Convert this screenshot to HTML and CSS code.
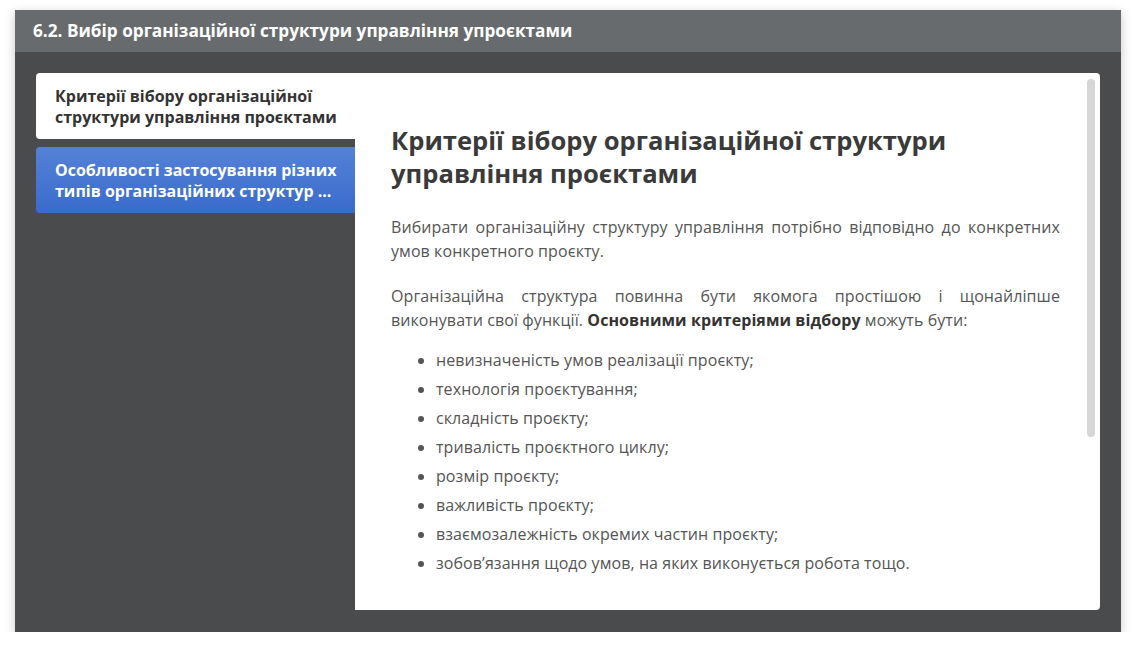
FILE: index.html
```html
<!DOCTYPE html>
<html lang="uk">
<head>
<meta charset="utf-8">
<title>6.2. Вибір організаційної структури управління упроєктами</title>
<link rel="stylesheet" href="styles.css">
</head>
<body>
<div class="frame">
  <div class="header">6.2. Вибір організаційної структури управління упроєктами</div>
  <div class="main">
    <div class="tabs">
      <div class="tab tab-active">Критерії вібору організаційної структури управління проєктами</div>
      <div class="tab tab-blue">Особливості застосування різних типів організаційних структур ...</div>
    </div>
    <div class="panel">
      <div class="scrollbar"></div>
      <h1 class="heading">Критерії вібору організаційної структури управління проєктами</h1>
      <p class="para">Вибирати організаційну структуру управління потрібно відповідно до конкретних умов конкретного проєкту.</p>
      <p class="para">Організаційна структура повинна бути якомога простішою і щонайліпше виконувати свої функції. <b>Основними критеріями відбору</b> можуть бути:</p>
      <ul class="list">
        <li>невизначеність умов реалізації проєкту;</li>
        <li>технологія проєктування;</li>
        <li>складність проєкту;</li>
        <li>тривалість проєктного циклу;</li>
        <li>розмір проєкту;</li>
        <li>важливість проєкту;</li>
        <li>взаємозалежність окремих частин проєкту;</li>
        <li>зобов’язання щодо умов, на яких виконується робота тощо.</li>
      </ul>
    </div>
  </div>
</div>
</body>
</html>
```
FILE: styles.css
```css
html, body {
  margin: 0;
  padding: 0;
  background: #ffffff;
}
body {
  font-family: "Open Sans", "Noto Sans", sans-serif;
}
.frame {
  margin: 10px 0 0 15px;
  width: 1106px;
  height: 622px;
  display: flex;
  flex-direction: column;
  box-shadow: 0 3px 10px rgba(0, 0, 0, 0.22);
}
.header {
  height: 42px;
  flex: none;
  background: #686b6d;
  color: #ffffff;
  font-weight: 700;
  font-size: 17.2px;
  line-height: 42px;
  padding-left: 18px;
  box-sizing: border-box;
}
.main {
  flex: 1;
  background: #4a4b4d;
  display: flex;
  padding: 21px 21px 22px 21px;
}
.tabs {
  width: 319px;
  flex: none;
  display: flex;
  flex-direction: column;
  gap: 8px;
}
.tab {
  height: 66px;
  box-sizing: border-box;
  padding: 13px 8px 11px 19px;
  font-size: 16px;
  font-weight: 700;
  line-height: 21px;
  border-radius: 4px 0 0 4px;
}
.tab-active {
  background: #ffffff;
  color: #333333;
}
.tab-blue {
  background: linear-gradient(#5582d7, #396bcb);
  color: #ffffff;
}
.panel {
  flex: 1;
  position: relative;
  background: #ffffff;
  border-radius: 0 4px 4px 0;
  padding: 51px 40px 0 36px;
  color: #555555;
}
.scrollbar {
  position: absolute;
  top: 6px;
  right: 5px;
  width: 8px;
  height: 358px;
  background: #d6d6d6;
  border-radius: 4px;
}
.heading {
  margin: 0 0 25px 0;
  font-size: 25.6px;
  font-weight: 700;
  line-height: 33px;
  color: #3a3a3a;
}
.para {
  margin: 0 0 21px 0;
  font-size: 16px;
  line-height: 24px;
  letter-spacing: 0.08px;
  text-align: justify;
}
.para b {
  color: #333333;
  font-weight: 700;
}
.list {
  margin: -7px 0 0 0;
  padding-left: 45px;
  font-size: 16px;
  line-height: 29px;
  letter-spacing: 0.08px;
}
```
